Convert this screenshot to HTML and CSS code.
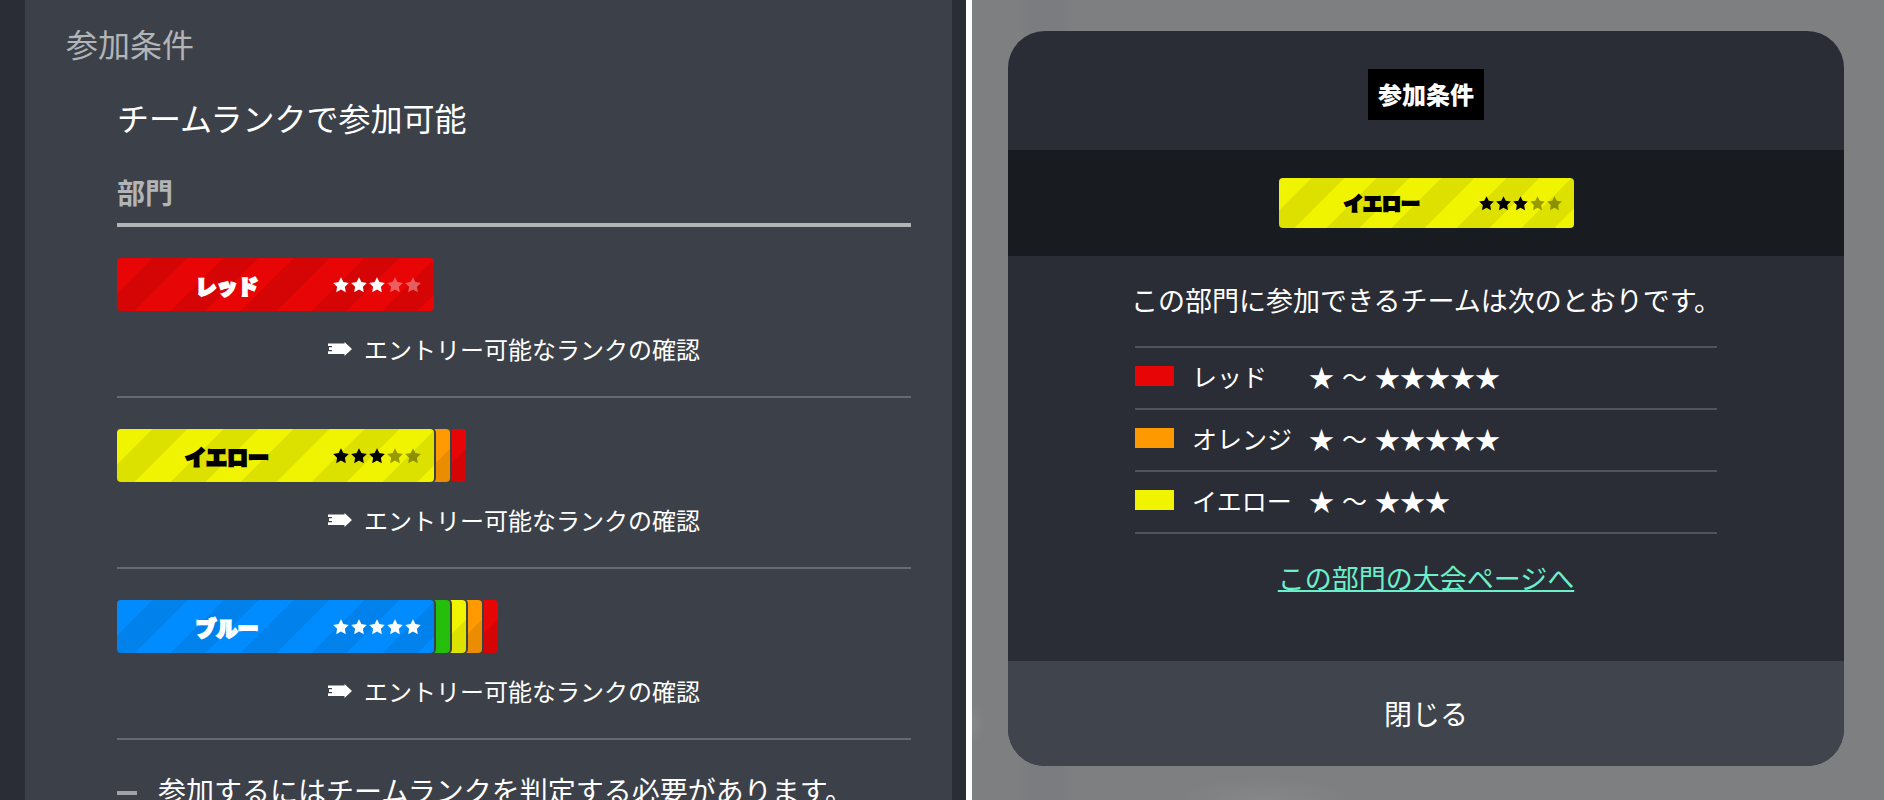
FILE: index.html
```html
<!DOCTYPE html>
<html lang="ja">
<head>
    <meta charset="UTF-8">
    <meta name="viewport" content="width=device-width, initial-scale=1.0">
    <title>参加条件</title>
    <link rel="stylesheet" href="styles.css">
</head>
<body>
    <svg class="defs" width="0" height="0" aria-hidden="true">
        <symbol id="star" viewBox="0 0 16 16">
            <path d="M8 0.3 L10.4 5.1 L15.8 5.9 L11.9 9.7 L12.8 15.2 L8 12.6 L3.2 15.2 L4.1 9.7 L0.2 5.9 L5.6 5.1 Z"/>
        </symbol>
        <symbol id="arrow" viewBox="0 0 24 14">
            <path d="M4 1.5 H16.5 V0 L24 7 L16.5 14 V12 H4 Z M0 1.5 H5 V4 H0 Z M1 5.2 H5 V8 H1 Z M0 9.2 H5 V12 H0 Z"/>
        </symbol>
    </svg>
    <div class="screens">
        <main class="page">
            <section class="panel">
                <h2>参加条件</h2>
                <div class="content">
                    <p class="lead">チームランクで参加可能</p>
                    <h3>部門</h3>
                    <ul class="divisions">
                        <li>
                            <div class="badges">
                                <div class="badge red">
                                    <span class="name">レッド</span>
                                    <span class="stars">
                                        <svg><use href="#star"/></svg><svg><use href="#star"/></svg><svg><use href="#star"/></svg><svg class="off"><use href="#star"/></svg><svg class="off"><use href="#star"/></svg>
                                    </span>
                                </div>
                            </div>
                            <a class="check" href="#rank"><svg><use href="#arrow"/></svg>エントリー可能なランクの確認</a>
                        </li>
                        <li>
                            <div class="badges">
                                <div class="badge yellow">
                                    <span class="name">イエロー</span>
                                    <span class="stars">
                                        <svg><use href="#star"/></svg><svg><use href="#star"/></svg><svg><use href="#star"/></svg><svg class="off"><use href="#star"/></svg><svg class="off"><use href="#star"/></svg>
                                    </span>
                                </div>
                                <span class="tail orange"></span>
                                <span class="tail red"></span>
                            </div>
                            <a class="check" href="#rank"><svg><use href="#arrow"/></svg>エントリー可能なランクの確認</a>
                        </li>
                        <li>
                            <div class="badges">
                                <div class="badge blue">
                                    <span class="name">ブルー</span>
                                    <span class="stars">
                                        <svg><use href="#star"/></svg><svg><use href="#star"/></svg><svg><use href="#star"/></svg><svg><use href="#star"/></svg><svg><use href="#star"/></svg>
                                    </span>
                                </div>
                                <span class="tail green"></span>
                                <span class="tail yellow"></span>
                                <span class="tail orange"></span>
                                <span class="tail red"></span>
                            </div>
                            <a class="check" href="#rank"><svg><use href="#arrow"/></svg>エントリー可能なランクの確認</a>
                        </li>
                    </ul>
                    <ul class="notes">
                        <li>参加するにはチームランクを判定する必要があります。</li>
                    </ul>
                </div>
            </section>
        </main>
        <div class="overlay">
            <div class="modal" id="rank" role="dialog" aria-labelledby="modalTitle">
                <header>
                    <h1 id="modalTitle">参加条件</h1>
                </header>
                <div class="target">
                    <div class="badge small yellow">
                        <span class="name">イエロー</span>
                        <span class="stars">
                            <svg><use href="#star"/></svg><svg><use href="#star"/></svg><svg><use href="#star"/></svg><svg class="off"><use href="#star"/></svg><svg class="off"><use href="#star"/></svg>
                        </span>
                    </div>
                </div>
                <div class="modal-body">
                    <p>この部門に参加できるチームは次のとおりです。</p>
                    <table>
                        <tr>
                            <td class="color"><span class="swatch red"></span></td>
                            <th scope="row">レッド</th>
                            <td><span class="range"><span>★</span><span>〜</span><span>★★★★★</span></span></td>
                        </tr>
                        <tr>
                            <td class="color"><span class="swatch orange"></span></td>
                            <th scope="row">オレンジ</th>
                            <td><span class="range"><span>★</span><span>〜</span><span>★★★★★</span></span></td>
                        </tr>
                        <tr>
                            <td class="color"><span class="swatch yellow"></span></td>
                            <th scope="row">イエロー</th>
                            <td><span class="range"><span>★</span><span>〜</span><span>★★★</span></span></td>
                        </tr>
                    </table>
                    <a class="page-link" href="#">この部門の大会ページへ</a>
                </div>
                <button type="button" class="close">閉じる</button>
            </div>
        </div>
    </div>
</body>
</html>
```

FILE: styles.css
```css
* {
    box-sizing: border-box;
}
body {
    margin: 0;
    font-family: "Noto Sans CJK JP", sans-serif;
    color: #fff;
    background-color: #fff;
}
h1, h2, h3, p, ul {
    margin: 0;
    padding: 0;
    font-weight: normal;
}
ul {
    list-style: none;
}
.defs {
    display: block;
}
.screens {
    display: grid;
    grid-template-columns: 966fr 912fr;
    gap: 6px;
    height: 100vh;
    overflow: hidden;
}

/* colors */
.red {
    background-color: #e80505;
}
.orange {
    background-color: #ff9900;
}
.yellow {
    background-color: #f0f400;
}
.green {
    background-color: #25be0a;
}
.blue {
    background-color: #008cff;
}

/* page */
.page {
    background-color: #2a2d35;
    padding: 0 14px 0 25px;
    min-height: 0;
}
.panel {
    background-color: #3c4149;
    padding: 19px 41px 0;
    height: 100%;
    overflow: hidden;
}
h2 {
    font-size: 32px;
    line-height: 48px;
    color: #b3b4b7;
}
.content {
    margin: 26px 0 0 51px;
}
.lead {
    font-size: 32px;
    line-height: 48px;
}
h3 {
    margin-top: 31px;
    padding-bottom: 11px;
    font-size: 28px;
    line-height: 40px;
    font-weight: bold;
    color: #b3b4b7;
    border-bottom: 4px solid #b3b4b7;
}
.divisions li {
    padding: 31px 0 28px;
    border-bottom: 2px solid #666a71;
}
.badges {
    display: flex;
    isolation: isolate;
}
.badge {
    display: flex;
    align-items: center;
    position: relative;
    z-index: 5;
    width: 317px;
    height: 53px;
    padding: 0 13px 0 4px;
    border-radius: 4px;
    background-image: repeating-linear-gradient(135deg, transparent 0 25px, rgba(0, 0, 0, 0.08) 25px 50px);
}
.badges .badge,
.tail {
    box-shadow: 0 0 0 2px #3c4149;
}
.badge .name {
    flex: 1;
    text-align: center;
    font-size: 21px;
    font-weight: 900;
    line-height: 32px;
    -webkit-text-stroke: 2px currentColor;
    paint-order: stroke fill;
}
.badge.yellow {
    color: #000;
}
.stars {
    display: flex;
    gap: 2px;
}
.stars svg {
    width: 16px;
    height: 16px;
    fill: currentColor;
}
.stars .off {
    opacity: 0.36;
}
.tail {
    position: relative;
    z-index: 4;
    width: 22px;
    margin-left: -6px;
    border-radius: 4px;
    background-image: linear-gradient(135deg, transparent 29px, rgba(0, 0, 0, 0.08) 29px);
}
.tail + .tail {
    z-index: 3;
}
.tail + .tail + .tail {
    z-index: 2;
}
.tail + .tail + .tail + .tail {
    z-index: 1;
}
.tail.green {
    background-image: none;
}
.check {
    display: flex;
    justify-content: center;
    align-items: center;
    gap: 12px;
    margin-top: 19px;
    font-size: 24px;
    line-height: 38px;
    color: #fff;
    text-decoration: none;
}
.check svg {
    width: 24px;
    height: 14px;
    fill: #fff;
}
.notes li {
    display: flex;
    align-items: center;
    gap: 21px;
    margin-top: 28px;
    font-size: 28px;
    line-height: 44px;
    white-space: nowrap;
}
.notes li::before {
    content: "";
    width: 20px;
    height: 4px;
    margin-top: 6px;
    background-color: #a1a3a7;
}

/* modal */
.overlay {
    padding: 31px 40px 34px 36px;
    background-color: #7e7f80;
    background-image:
        radial-gradient(ellipse 90px 22px at 32% 100%, #868788, transparent),
        radial-gradient(ellipse 14px 22px at 0 724px, #868788, transparent),
        linear-gradient(90deg, transparent 48px, #7a7c80 60px 90px, transparent 102px);
}
.modal {
    border-radius: 37px;
    overflow: hidden;
    background-color: #2a2d35;
    text-align: center;
}
.modal header {
    padding: 38px 0 30px;
    display: flex;
    justify-content: center;
}
h1 {
    padding: 7px 10px 9px;
    font-size: 24px;
    font-weight: 900;
    line-height: 35px;
    background-color: #000;
}
.target {
    display: flex;
    justify-content: center;
    padding: 28px 0;
    background-color: #181b1f;
}
.badge.small {
    width: 295px;
    height: 50px;
    padding: 0 12px 0 7px;
    background-image: repeating-linear-gradient(135deg, transparent 0 23px, rgba(0, 0, 0, 0.08) 23px 46px);
}
.small .name {
    font-size: 19px;
}
.small .stars svg {
    width: 15px;
    height: 15px;
}
.modal-body {
    padding: 24px 0 63px;
}
.modal-body p {
    font-size: 27px;
    line-height: 40px;
}
table {
    width: 582px;
    margin: 26px auto 24px;
    border-collapse: collapse;
    border-top: 2px solid #50545c;
    font-size: 25px;
    line-height: 40px;
    text-align: left;
}
tr {
    height: 62px;
    border-bottom: 2px solid #50545c;
}
td, th {
    padding: 0 0 4px;
    font-weight: normal;
}
.color {
    width: 57px;
}
th {
    width: 117px;
}
.swatch {
    display: block;
    width: 39px;
    height: 20px;
}
.range {
    display: flex;
    gap: 8px;
}
.page-link {
    font-size: 27px;
    line-height: 40px;
    display: inline-block;
    vertical-align: top;
    color: #6bf0cb;
    text-decoration-thickness: 2px;
    text-decoration-skip-ink: none;
}
.close {
    display: block;
    width: 100%;
    padding: 32px 0 33px;
    border: none;
    background-color: #3f444d;
    color: #fff;
    font-family: inherit;
    font-size: 28px;
    line-height: 40px;
    cursor: pointer;
}
```
